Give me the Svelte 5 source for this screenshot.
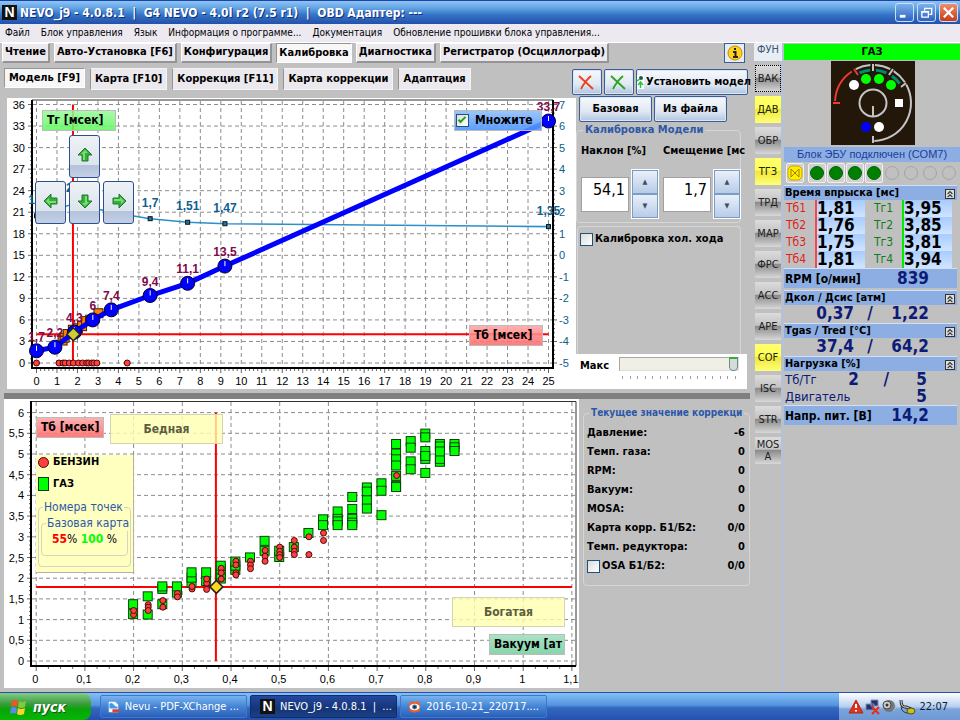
<script lang="ts">
    type Point = { x: number, y: number, label: string };

    const menu = ["Файл", "Блок управления", "Язык", "Информация о программе...", "Документация", "Обновление прошивки блока управления..."];
    const tabs = ["Чтение", "Авто-Установка [F6]", "Конфигурация", "Калибровка", "Диагностика", "Регистратор (Осциллограф)"];
    const subTabs = ["Модель [F9]", "Карта [F10]", "Коррекция [F11]", "Карта коррекции", "Адаптация"];
    const functions = ["ВАК", "ДАВ", "ОБР", "ТГЗ", "ТРД", "МАР", "ФРС", "АСС", "АРЕ", "COF", "ISC", "STR", "MOSA"];
    const enabled = ["ДАВ", "ТГЗ", "COF"];

    let tab = $state("Калибровка");
    let subTab = $state("Модель [F9]");
    let multiplier = $state(true);
    let idle = $state(false);
    let osa = $state(false);
    let level = $state(100);
    let slope = $state("54,1");
    let offset = $state("1,7");

    const corrections = [
        ["Давление:", "-6"],
        ["Темп. газа:", "0"],
        ["RPM:", "0"],
        ["Вакуум:", "0"],
        ["MOSA:", "0"],
        ["Карта корр. Б1/Б2:", "0/0"],
        ["Темп. редуктора:", "0"]
    ];

    const injection = [
        ["1", "1,81", "3,95"],
        ["2", "1,76", "3,85"],
        ["3", "1,75", "3,81"],
        ["4", "1,81", "3,94"]
    ];

    const range = (n: number) => Array.from({ length: n }, (_, i) => i);
    const fmt = (n: number) => String(Math.round(n * 10) / 10).replace(".", ",");

    // model chart scales
    const mx = (v: number) => 29.5 + v * 20.48;
    const my = (v: number) => 265 - v * 7.18;

    const model: Point[] = [
        { x: 0, y: 1.7, label: "1,7" },
        { x: 0.9, y: 2.2, label: "2,2" },
        { x: 1.85, y: 4.3, label: "4,3" },
        { x: 2.75, y: 6, label: "6" },
        { x: 3.65, y: 7.4, label: "7,4" },
        { x: 5.55, y: 9.4, label: "9,4" },
        { x: 7.38, y: 11.1, label: "11,1" },
        { x: 9.2, y: 13.5, label: "13,5" },
        { x: 25, y: 33.7, label: "33,7" }
    ];
    const factor: Point[] = [
        { x: 0, y: 20.5, label: "1,7" },
        { x: 1.85, y: 22.2, label: "2,2" },
        { x: 3.65, y: 21, label: "2" },
        { x: 5.55, y: 20.1, label: "1,7" },
        { x: 7.38, y: 19.6, label: "1,51" },
        { x: 9.2, y: 19.4, label: "1,47" },
        { x: 25, y: 19, label: "1,35" }
    ];
    const samples = [[1.25, 3.2], [1.35, 3.6], [1.5, 4.1], [1.75, 4.7], [2, 4.9], [2.2, 5.2], [2.4, 5.9], [2.6, 6.1], [3, 7]];
    const petrolTimes = [0, 1.1, 1.3, 1.4, 1.6, 1.8, 2.05, 2.25, 2.45, 2.55, 2.7, 2.8, 2.95, 4.43];

    // vacuum chart scales
    const vx = (v: number) => 32.2 + v * 487;
    const vy = (v: number) => 262 - v * 41.4;

    const gas: [number, number[]][] = [
        [0.2, [1.12, 1.36]], [0.23, [1.11, 1.55]], [0.26, [1.36, 1.73, 1.79]], [0.29, [1.64, 1.79]],
        [0.32, [1.88, 2, 2.13]], [0.35, [1.92, 2.13]], [0.38, [1.98, 2.08, 2.2, 2.29]], [0.41, [2.19, 2.29, 2.39]],
        [0.44, [2.49]], [0.47, [2.65, 2.89]], [0.5, [2.5, 2.65]], [0.53, [2.74]], [0.56, [3.08]],
        [0.59, [3.41, 3.27]], [0.62, [3.6, 3.42, 3.36, 3.27]], [0.65, [3.95, 3.66, 3.42, 3.33, 3.27]],
        [0.68, [4.18, 4.08, 3.87, 3.67]], [0.71, [4.28, 4.1, 3.51]], [0.74, [5.23, 5, 4.86, 4.71, 4.46, 4.22, 4.19]],
        [0.77, [5.3, 5.14, 4.81, 4.62]], [0.8, [5.48, 5.39, 5.06, 4.87, 4.94, 4.53]],
        [0.83, [5.23, 5.17, 4.8, 4.87, 5.05]], [0.86, [5.23, 5.15, 5.06]]
    ];
    const petrol: [number, number[]][] = [
        [0.2, [1.12, 1.22]], [0.23, [1.36, 1.3, 1.22]], [0.26, [1.46, 1.3]], [0.29, [1.63, 1.55]], [0.32, [1.74, 1.8]],
        [0.35, [1.73, 1.88, 1.98]], [0.38, [2.24, 2.13, 1.98]], [0.41, [2.41, 2.32, 2.13, 2.08]], [0.44, [2.41, 2.32, 2.23]],
        [0.47, [2.67, 2.53, 2.41]], [0.5, [2.75, 2.65, 2.57, 2.5]], [0.53, [2.91, 2.75, 2.65, 2.57]], [0.56, [3, 2.57]],
        [0.59, [3.09, 2.91]], [0.74, [4.48]]
    ];

    const line = (points: Point[]) => points.map(p => `${mx(p.x)},${my(p.y)}`).join(" ");

    // arc round the centre of the dial, degrees clockwise from the right
    function arc(r: number, from: number, to: number) {
        const at = (a: number) => `${42 + r * Math.cos(a * Math.PI / 180)} ${42 + r * Math.sin(a * Math.PI / 180)}`;
        return `M${at(from)}A${r} ${r} 0 0 1 ${at(to)}`;
    }
</script>

{#snippet arrow(name: string, angle: number)}
    <button class="arrow {name}" aria-label={name}>
        <svg viewBox="0 0 16 16" width="16" height="16">
            <path transform="rotate({angle} 8 8)" d="M8 1 15 8H11V14H5V8H1Z" fill="#35b03c" stroke="#1c7a2c" />
            <path transform="rotate({angle} 8 8)" d="M8 3 11 6H8V13H6V7H4Z" fill="#7fdc74" />
        </svg>
    </button>
{/snippet}

{#snippet collapse()}
    <button class="collapse" aria-label="Свернуть">
        <svg viewBox="0 0 10 10" width="8" height="8"><path d="M2 5 5 2 8 5M2 9 5 6 8 9" fill="none" stroke="#333" stroke-width="1.4" /></svg>
    </button>
{/snippet}

{#snippet diamond(x: number, y: number, fill: string)}
    <path transform="translate({x} {y})" d="M0-6.5 6.5 0 0 6.5-6.5 0Z" {fill} stroke="#222" stroke-width="1.5" />
{/snippet}

<div class="app">
    <header class="title">
        <span class="logo">N</span>
        <h1>NEVO_j9 - 4.0.8.1  |  G4 NEVO - 4.0l r2 (7.5 r1)  |  OBD Адаптер: ---</h1>
        <button class="win" aria-label="Свернуть"><svg viewBox="0 0 16 16"><path d="M3 12H9" stroke="#fff" stroke-width="3" /></svg></button>
        <button class="win" aria-label="Развернуть"><svg viewBox="0 0 16 16"><path d="M6 6V3.5H13.5V10H11M3 7H10V13H3ZM3 7.5H10" fill="none" stroke="#fff" stroke-width="1.4" /></svg></button>
        <button class="win close" aria-label="Закрыть"><svg viewBox="0 0 16 16"><path d="M3 3 13 13M13 3 3 13" stroke="#fff" stroke-width="2.4" /></svg></button>
    </header>

    <nav class="menu">
        {#each menu as item}
            <button>{item}</button>
        {/each}
    </nav>

    <main>
        <div class="work">
            <div class="tabs">
                {#each tabs as name}
                    <button class:active={tab === name} onclick={() => tab = name}>{name}</button>
                {/each}
                <button class="info" aria-label="Информация">
                    <svg viewBox="0 0 16 16" width="16" height="16">
                        <circle cx="8" cy="8" r="7" fill="#ffd21c" stroke="#c88a00" />
                        <path d="M8 3V5M6 7H8.500V12M6 12H11" fill="none" stroke="#222" stroke-width="2" />
                    </svg>
                </button>
            </div>

            <div class="subbar">
                <div class="subtabs">
                    {#each subTabs as name}
                        <button class:active={subTab === name} onclick={() => subTab = name}>{name}</button>
                    {/each}
                </div>
                <div class="actions">
                    <button class="xp cross" aria-label="Отмена"><svg viewBox="0 0 16 16" width="16" height="16"><path d="M1 2 15 15M13 2Q7 7 3 15" fill="none" stroke="#e8431a" stroke-width="1.8" /></svg></button>
                    <button class="xp cross" aria-label="Применить"><svg viewBox="0 0 16 16" width="16" height="16"><path d="M1 2 15 15M13 2Q7 7 3 15" fill="none" stroke="#2aa51c" stroke-width="1.8" /></svg></button>
                    <button class="xp apply">
                        <svg viewBox="0 0 7 14" width="7" height="14"><path d="M0 0H7V14H0Z" fill="#fff" /><circle cx="4" cy="3" r="2" fill="#1c5a50" /><path d="M0 6 3 4M3.500 7V13M1 10 3.500 7 6 10" stroke="#24c73c" stroke-width="1.5" fill="none" /></svg>
                        <span>Установить модел</span>
                    </button>
                </div>
            </div>

            <div class="upper">
                <div class="chart">
                    <svg viewBox="0 0 569 291" role="img" aria-label="Модель">
                        <g class="grid">
                            {#each range(26) as i}
                                <path d="M{mx(i)} 3V270" />
                            {/each}
                            {#each range(13) as i}
                                <path d="M25 {my(i * 3)}H546" />
                            {/each}
                        </g>
                        <g class="ticks">
                            {#each range(126) as i}
                                <path d="M{mx(i / 5)} 270v{i % 5 ? 3 : 5}" />
                            {/each}
                            {#each range(61) as i}
                                <path d="M25 {my(i * 0.6)}h{i % 5 ? -2 : -4}M546 {my(i * 0.6)}h{i % 5 ? 2 : 4}" />
                            {/each}
                        </g>
                        <path d="M25 2H546" class="thin" />
                        <path d="M25 2V270H546V2" class="frame" />
                        <g class="axis">
                            {#each range(26) as i}
                                <text x={mx(i)} y="287" text-anchor="middle">{i}</text>
                            {/each}
                            {#each range(13) as i}
                                <text x="18" y={my(i * 3) + 4} text-anchor="end">{i * 3}</text>
                                <text x="552" y={my(i * 3) + 4} class="right">{i - 5}</text>
                            {/each}
                        </g>
                        <polyline points={line(factor)} fill="none" stroke="#2b8fc9" stroke-width="1.6" />
                        {#each factor as p}
                            <rect x={mx(p.x) - 2} y={my(p.y) - 2} width="4" height="4" fill="#1c7ba8" stroke="#111" />
                            <text class="factor" x={mx(p.x)} y={my(p.y) - 12} text-anchor="middle">{p.label}</text>
                        {/each}
                        <path d="M{mx(0)} {my(4)}H{mx(25)}M{mx(1.78)} {my(36)}V{my(0)}" class="cross-hair" />
                        {#each samples as [x, y]}
                            <rect x={mx(x) - 4} y={my(y) - 4} width="9" height="9" fill="#ff8000" stroke="#3c2400" />
                        {/each}
                        <polyline points={line(model)} fill="none" stroke="#0000ff" stroke-width="5" />
                        {#each model as p}
                            <circle cx={mx(p.x)} cy={my(p.y)} r="7" fill="#0000ff" stroke="#000028" />
                            <path d="M{mx(p.x)} {my(p.y) - 5}v5" stroke="#fff" />
                            <text class="value" x={mx(p.x)} y={my(p.y) - 10} text-anchor="middle">{p.label}</text>
                        {/each}
                        {@render diamond(mx(1.8), my(4), "#cccc33")}
                        {#each petrolTimes as x}
                            <circle cx={mx(x)} cy={my(0)} r="3" fill="#ff4040" stroke="#4c0808" />
                        {/each}
                    </svg>
                    <span class="tag green">Тг [мсек]</span>
                    <label class="tag blue"><input type="checkbox" bind:checked={multiplier}>Множите</label>
                    <span class="tag red low">Тб [мсек]</span>
                    <div class="pad">
                        {@render arrow("up", 0)}
                        {@render arrow("left", 270)}
                        {@render arrow("down", 180)}
                        {@render arrow("right", 90)}
                    </div>
                </div>

                <div class="side">
                    <div class="sources">
                        <button class="xp">Базовая</button>
                        <button class="xp">Из файла</button>
                    </div>
                    <fieldset class="tune">
                        <legend>Калибровка Модели</legend>
                        <label for="slope">Наклон [%]</label>
                        <label for="offset">Смещение [мс</label>
                        <div class="spin">
                            <input id="slope" type="text" bind:value={slope}>
                            <div><button aria-label="Больше">▲</button><button aria-label="Меньше">▼</button></div>
                        </div>
                        <div class="spin">
                            <input id="offset" type="text" bind:value={offset}>
                            <div><button aria-label="Больше">▲</button><button aria-label="Меньше">▼</button></div>
                        </div>
                    </fieldset>
                    <div class="idle">
                        <label><input type="checkbox" bind:checked={idle}>Калибровка хол. хода</label>
                    </div>
                    <div class="max">
                        <label for="max">Макс</label>
                        <div>
                            <input id="max" type="range" min="0" max="100" bind:value={level}>
                            <div class="marks">{#each range(16) as _}<i></i>{/each}</div>
                        </div>
                    </div>
                </div>
            </div>

            <div class="splitter"></div>

            <div class="lower">
                <div class="chart">
                    <svg viewBox="0 0 575 289" role="img" aria-label="Вакуум">
                        <g class="grid">
                            {#each range(12) as i}
                                <path d="M{vx(i / 10)} 3V267" />
                            {/each}
                            {#each range(13) as i}
                                <path d="M28 {vy(i / 2)}H572" />
                            {/each}
                        </g>
                        <g class="ticks">
                            {#each range(45) as i}
                                <path d="M{vx(i / 40)} 267v{i % 4 ? 3 : 5}" />
                            {/each}
                            {#each range(61) as i}
                                <path d="M27 {vy(i / 10)}h{i % 5 ? -2 : -4}" />
                            {/each}
                        </g>
                        <path d="M27 2.500H572V267" class="thin" />
                        <path d="M27 2V267H572" class="frame" />
                        <g class="axis">
                            {#each range(12) as i}
                                <text x={vx(i / 10) - 1} y="284" text-anchor="middle">{fmt(i / 10)}</text>
                            {/each}
                            {#each range(13) as i}
                                <text x="20" y={vy(i / 2) + 4} text-anchor="end">{fmt(i / 2)}</text>
                            {/each}
                        </g>
                        <path d="M{vx(0)} {vy(1.79)}H{vx(1.1)}M{vx(0.369)} {vy(6)}V{vy(0)}" class="cross-hair" />
                        {#each gas as [x, ys]}
                            {#each ys as y}
                                <rect x={vx(x) - 5} y={vy(y) - 5} width="9" height="9" fill="#00ff00" stroke="#0a400a" />
                            {/each}
                        {/each}
                        {#each petrol as [x, ys]}
                            {#each ys as y}
                                <circle cx={vx(x)} cy={vy(y)} r="3" fill="#ff4040" stroke="#4c0808" />
                            {/each}
                        {/each}
                        {@render diamond(vx(0.37), vy(1.79), "#ffd81c")}
                    </svg>
                    <span class="tag red high">Тб [мсек]</span>
                    <span class="zone lean">Бедная</span>
                    <span class="zone rich">Богатая</span>
                    <span class="tag teal">Вакуум [ат</span>
                    <div class="legend">
                        <p><i class="dot"></i>БЕНЗИН</p>
                        <p><i class="box"></i>ГАЗ</p>
                        <fieldset>
                            <legend>Номера точек</legend>
                            <fieldset>
                                <legend>Базовая карта</legend>
                                <b class="hot">55</b>% <b class="lime">100</b> %
                            </fieldset>
                        </fieldset>
                    </div>
                </div>

                <fieldset class="current">
                    <legend>Текущее значение коррекци</legend>
                    <dl>
                        {#each corrections as [name, value]}
                            <div><dt>{name}</dt><dd>{value}</dd></div>
                        {/each}
                        <div><dt><label><input type="checkbox" bind:checked={osa}>OSA Б1/Б2:</label></dt><dd>0/0</dd></div>
                    </dl>
                </fieldset>
            </div>
        </div>

        <div class="functions">
            <h2>ФУН</h2>
            {#each functions as name}
                <button class:on={enabled.includes(name)} class:focus={name === "ВАК"}>{name}</button>
            {/each}
        </div>

        <aside>
            <div class="fuel">ГАЗ</div>
            <svg class="dial" viewBox="0 0 84 84" width="84" height="84" role="img" aria-label="Переключатель">
                <rect width="84" height="84" fill="#231709" />
                <g fill="none" stroke="#c4c4c4" stroke-width="2">
                    <circle cx="42" cy="42" r="13.500" />
                    <path d="M42 45V56M42 3V10M42 75V82M58 14 62 8M70 26 75 22" />
                    <path d={arc(38, 243, 266)} />
                    <path d={arc(38, 273, 297)} />
                    <path d={arc(38, 303, 327)} />
                    <path d={arc(38, 331, 448)} />
                    <path d="{arc(38, 183, 236)}M2 42H9M23 8 27 14" stroke="#ee3a30" />
                    <path d="{arc(33, 246, 265)}{arc(33, 275, 294)}{arc(33, 305, 324)}" stroke="#008c70" stroke-width="3" />
                </g>
                <g fill="#00ff00">
                    <circle cx="23" cy="24" r="5" fill="#fff" />
                    <circle cx="35" cy="18" r="5" />
                    <circle cx="48" cy="18" r="5" />
                    <circle cx="60" cy="24" r="5" />
                    <rect x="64" y="38" width="8" height="8" fill="#fff" />
                    <circle cx="35" cy="66" r="5" fill="#00f" />
                    <circle cx="48" cy="66" r="5" fill="#fff" />
                </g>
            </svg>
            <div class="status">Блок ЭБУ подключен (COM7)</div>
            <div class="leds">
                <button class="valve" aria-label="Клапан"><svg viewBox="0 0 16 16" width="16" height="16"><path d="M4 1H12L15 4V12L12 15H4L1 12V4Z" fill="#ffee00" stroke="#c8a800" /><path d="M4 4V12L12 4V12Z" fill="none" stroke="#a08000" /></svg></button>
                {#each range(8) as i}
                    <button class:lit={i < 4} aria-label="Цилиндр {i + 1}"><i></i></button>
                {/each}
            </div>

            <section>
                <h3>Время впрыска [мс] {@render collapse()}</h3>
                <div class="injection">
                    {#each injection as [n, tb, tg]}
                        <span class="tb">Тб{n}</span><output class="tb">{tb}</output>
                        <span class="tg">Тг{n}</span><output class="tg">{tg}</output>
                    {/each}
                </div>
            </section>
            <section class="single"><span>RPM [о/мин]</span><output>839</output></section>
            <section>
                <h3>Дкол / Дсис [атм] {@render collapse()}</h3>
                <div class="pair"><output>0,37</output><b>/</b><output>1,22</output></div>
            </section>
            <section>
                <h3>Tgas / Tred [°C] {@render collapse()}</h3>
                <div class="pair"><output>37,4</output><b>/</b><output>64,2</output></div>
            </section>
            <section>
                <h3>Нагрузка [%] {@render collapse()}</h3>
                <div class="load"><span>Тб/Тг</span><output>2</output><b>/</b><output>5</output></div>
                <div class="load"><span class="wide">Двигатель</span><output>5</output></div>
            </section>
            <section class="single"><span>Напр. пит. [В]</span><output>14,2</output></section>
        </aside>
    </main>

    <footer>
        <button class="start">
            <svg viewBox="0 0 18 18" width="18" height="18">
                <path d="M3 3Q6 1 9 3L8 9Q5 7 2 9Z" fill="#f0552a" />
                <path d="M10 3Q13 5 17 3L16 9Q12 11 9 9Z" fill="#7ccc3c" />
                <path d="M2 10Q5 8 8 10L7 16Q4 14 1 16Z" fill="#5a8cf0" />
                <path d="M9 10Q12 12 16 10L15 16Q11 18 8 16Z" fill="#ffd030" />
            </svg>
            пуск
        </button>
        <button class="task">
            <svg viewBox="0 0 16 16" width="16" height="16"><path d="M1 1H10L14 5V15H1Z" fill="#f4f8ff" /><path d="M2 4Q5 1 8 5T13 7V10H2Z" fill="#3c9ce8" /><path d="M6 11H15V15H6Z" fill="#e04030" /></svg>
            <span>Nevu - PDF-XChange ...</span>
        </button>
        <button class="task current-task"><span class="logo">N</span><span>NEVO_j9 - 4.0.8.1  |  ...</span></button>
        <button class="task">
            <svg viewBox="0 0 16 16" width="16" height="16"><path d="M3 1 8 2 13 1 15 6 14 13 8 15 2 13 1 6Z" fill="#e8602c" /><ellipse cx="8" cy="8" rx="6" ry="4" fill="#fff" /><circle cx="8" cy="8" r="3" fill="#3c6ea8" /><circle cx="8" cy="8" r="1.300" fill="#111" /></svg>
            <span>2016-10-21_220717....</span>
        </button>
        <div class="tray">
            <svg viewBox="0 0 68 16" width="68" height="16">
                <path d="M8 1 15 14H1Z" fill="#e0341c" stroke="#b82410" /><path d="M8 5V9M8 11V12.500" stroke="#fff" stroke-width="2" />
                <path d="M23 1H30V7H23ZM18 5H26V11H18Z" fill="#28306c" stroke="#8890b8" /><path d="M24 8 31 15M31 8 24 15" stroke="#e82a20" stroke-width="2" />
                <circle cx="41" cy="7" r="6" fill="#777" /><circle cx="39" cy="6" r="4" fill="#ccc" stroke="#444" /><circle cx="39" cy="6" r="1.500" fill="#333" /><path d="M45 12Q48 10 48 6" stroke="#a8b8f0" fill="none" />
                <path d="M53 1Q53 9 58 8L63 10" fill="none" stroke="#222" stroke-width="3" /><path d="M53 1Q53 9 58 8L63 10" fill="none" stroke="#eee" /><path d="M53 8Q54 14 60 14" fill="none" stroke="#333" /><ellipse cx="63" cy="12" rx="4" ry="3" fill="#c8c020" stroke="#555510" />
            </svg>
            <time>22:07</time>
        </div>
    </footer>
</div>

<style>
    :global(body) {
        margin: 0;
    }

    .app {
        --face: "DejaVu Sans Condensed", "DejaVu Sans", sans-serif;
        --navy: #0c1c78;
        --bar: #8caee2;
        display: flex;
        flex-direction: column;
        min-height: 100vh;
        background: #c0c0c0;
        font: 11px/14px var(--face);
        color: #000;
    }

    .app *, .app *::before {
        box-sizing: border-box;
    }

    button, input {
        font: inherit;
        color: inherit;
        margin: 0;
        padding: 0;
    }

    button {
        border: 0;
        background: none;
        white-space: nowrap;
    }

    h1, h2, h3, p, dl, dd {
        margin: 0;
    }

    fieldset {
        min-width: 0;
        margin: 0;
        padding: 0;
        border: 1px solid #d6d6d6;
        border-radius: 4px;
    }

    legend {
        padding: 0 2px;
        color: #2c58a8;
        white-space: nowrap;
    }

    input[type="checkbox"] {
        appearance: none;
        flex: none;
        width: 13px;
        height: 13px;
        border: 1px solid #1c5180;
        background: linear-gradient(135deg, #dcdcd7, #fff);
    }

    input[type="checkbox"]:checked::before {
        content: "";
        display: block;
        width: 8px;
        height: 4px;
        margin: 2px 1px;
        border: solid #21a121;
        border-width: 0 0 2px 2px;
        transform: rotate(-45deg);
    }

    /* window title and menu */
    .title {
        display: flex;
        align-items: center;
        gap: 2px;
        height: 24px;
        padding: 0 2px;
        border-top: 1px solid #1c44a8;
        background: linear-gradient(#8ec4f4, #64a4e4 30%, #3474c8 60%, #2450a8);
    }

    .logo {
        flex: none;
        width: 15px;
        height: 15px;
        background: #111;
        color: #fff;
        font: bold 14px/15px "Liberation Sans", sans-serif;
        text-align: center;
    }

    h1 {
        flex: 1;
        padding-left: 1px;
        color: #fff;
        font: bold 12px/20px var(--face);
        text-shadow: 1px 1px #10307c;
        white-space: pre;
        overflow: hidden;
    }

    .win {
        width: 19px;
        height: 19px;
        margin-left: 1px;
        border: 1px solid #c8e0fc;
        border-radius: 3px;
        background: linear-gradient(#7cb0ec, #2c62c0);
    }

    .win svg {
        display: block;
        width: 15px;
        margin: auto;
    }

    .close {
        background: linear-gradient(#f08c6c, #c83c18);
    }

    .menu {
        display: flex;
        gap: 11px;
        height: 19px;
        padding: 0 5px;
        background: #ece9f0;
        border-bottom: 1px solid #fff;
        font-size: 10px;
    }

    main {
        flex: 1;
        display: flex;
    }

    .work {
        flex: 1;
        min-width: 0;
    }

    /* tabs */
    .tabs, .subtabs {
        display: flex;
        font-weight: bold;
    }

    .tabs {
        gap: 4px;
        height: 20px;
        padding: 0 5px 0 2px;
    }

    .tabs button {
        padding: 0 2px 1px;
        border: 1px solid #fff;
        border-right: 2px solid #949494;
        border-bottom: 2px solid #949494;
        background: #ece9ee;
    }

    .tabs .active, .subtabs .active {
        border: 1px solid #949494;
        border-right-color: #fff;
        border-bottom-color: #fff;
        background: #f8f7f8;
    }

    .tabs .info {
        width: 21px;
        margin-left: auto;
        padding: 0;
        border: 1px solid #3c5e98;
        background: #e4ecf4;
    }

    .info svg {
        display: block;
        margin: auto;
    }

    .subbar {
        display: flex;
        justify-content: space-between;
        align-items: flex-start;
        height: 33px;
        padding: 5px 2px 0 4px;
    }

    .subtabs {
        gap: 5px;
    }

    .subtabs button {
        height: 22px;
        padding: 0 4px;
        border: 1px solid #f4f4f4;
        border-left-color: #949494;
        background: #ece9ee;
    }

    .subtabs .active {
        height: 20px;
    }

    .actions, .sources {
        display: flex;
        gap: 2px;
        font-weight: bold;
    }

    .actions {
        padding-top: 1px;
    }

    .xp {
        height: 26px;
        border: 1px solid #3c5e98;
        border-radius: 2px;
        background: linear-gradient(#f6f9fc, #e0e8f2 60%, #b0c4e0);
        box-shadow: inset 0 0 0 1px #dce6f2;
    }

    .cross {
        width: 30px;
    }

    .cross svg {
        display: block;
        margin: 4px 5px;
    }

    .apply {
        display: flex;
        align-items: center;
        gap: 2px;
        width: 112px;
    }

    .apply svg {
        flex: none;
    }

    /* charts */
    .upper, .lower {
        display: flex;
    }

    .upper {
        padding-left: 7px;
    }

    .chart {
        flex: 1;
        position: relative;
        min-width: 0;
        background: #fff;
    }

    .upper .chart {
        margin-top: 2px;
    }

    .chart > svg {
        display: block;
        width: 100%;
    }

    .grid path {
        stroke: #8c8c8c;
        stroke-dasharray: 4 3;
    }

    .ticks path {
        stroke: #666;
    }

    .frame {
        fill: none;
        stroke: #000;
        stroke-width: 2;
    }

    .thin {
        fill: none;
        stroke: #333;
    }

    .axis {
        font: 11px "Liberation Sans", sans-serif;
    }

    .right {
        fill: #0c6088;
    }

    .factor, .value {
        font: bold 12px "Liberation Sans", sans-serif;
        fill: #0c6090;
    }

    .value {
        fill: #80084c;
    }

    .cross-hair {
        stroke: #ff0000;
        stroke-width: 2;
    }

    .tag, .zone {
        position: absolute;
        height: 21px;
        padding: 0 4px;
        border: 1px solid #bcbcbc;
        font-size: 12px;
        font-weight: bold;
        line-height: 19px;
        white-space: nowrap;
    }

    .green {
        top: 12px;
        left: 35px;
        width: 74px;
        background: linear-gradient(#98fa98d8, #60f860e0);
    }

    .blue {
        display: flex;
        align-items: center;
        gap: 6px;
        top: 12px;
        right: 34px;
        width: 88px;
        padding: 0 1px;
        background: linear-gradient(#8cbcfcdc, #4c94fce4);
    }

    .red {
        background: linear-gradient(#ffa4a4dc, #ff6c6ce4);
    }

    .low {
        right: 33px;
        bottom: 43px;
        width: 74px;
    }

    .high {
        top: 18px;
        left: 32px;
        width: 68px;
    }

    .teal {
        right: 14px;
        bottom: 33px;
        width: 76px;
        background: linear-gradient(#a0e0c0e4, #7cd0a4e8);
    }

    .zone {
        width: 113px;
        height: 30px;
        border-color: #d4d4b4;
        background: #ffffb0cc;
        color: #5c5c40;
        line-height: 28px;
        text-align: center;
    }

    .lean {
        top: 15px;
        left: 106px;
    }

    .rich {
        right: 14px;
        bottom: 61px;
    }

    .pad {
        position: absolute;
        top: 37px;
        left: 28px;
        display: grid;
        grid-template: ". up ." 43px "left down right" 43px / 31px 31px 31px;
        gap: 3px;
    }

    .arrow {
        border: 1px solid #2c508c;
        border-radius: 3px;
        background: linear-gradient(#eef2f6, #dce4ec 70%, #b4c2dc 72%, #c4d0e4);
    }

    .up {
        grid-area: up;
    }

    .left {
        grid-area: left;
    }

    .down {
        grid-area: down;
    }

    .arrow.right {
        grid-area: right;
    }

    .legend {
        position: absolute;
        top: 56px;
        left: 32px;
        width: 98px;
        height: 118px;
        border: solid #b4b4a0;
        border-width: 0 1px 1px 0;
        background: #ffffc0;
    }

    .legend p {
        display: flex;
        align-items: center;
        gap: 4px;
        height: 14px;
        margin-bottom: 8px;
        padding: 0 2px;
        font-weight: bold;
    }

    .legend fieldset {
        height: 68px;
        margin: 0 2px;
        border-color: #d4d4c0;
        font-size: 12px;
        line-height: 16px;
    }

    .legend fieldset fieldset {
        height: 41px;
        text-align: center;
    }

    .legend fieldset legend {
        margin-left: 4px;
        padding: 0 1px;
        text-align: left;
    }

    .dot, .box {
        width: 11px;
        height: 11px;
        border: 1px solid #4c0808;
        border-radius: 50%;
        background: #ff4040;
    }

    .box {
        height: 14px;
        border-color: #0a400a;
        border-radius: 0;
        background: #0f0;
    }

    .hot {
        color: #f00;
    }

    .lime {
        color: #0f0;
    }

    /* panel beside the model chart */
    .side {
        display: flex;
        flex-direction: column;
        width: 174px;
        font-weight: bold;
    }

    .sources {
        padding-left: 3px;
    }

    .sources button {
        width: 73px;
    }

    .tune {
        display: grid;
        grid-template-columns: 80px 78px;
        align-content: start;
        gap: 11px 2px;
        height: 100px;
        margin: 1px 9px 0 0;
        padding: 7px 4px 0;
    }

    .tune legend {
        margin-left: 2px;
    }

    .tune label {
        white-space: nowrap;
    }

    .spin {
        display: flex;
        align-items: center;
        gap: 2px;
    }

    .spin input {
        width: 48px;
        height: 35px;
        padding: 0 3px 10px 0;
        border: 1px solid #a0a0a0;
        background: #fff;
        font: 16px var(--face);
        text-align: right;
    }

    .spin div {
        display: flex;
        flex-direction: column;
        width: 28px;
        height: 50px;
        border: 1px solid #fff;
    }

    .spin button {
        flex: 1;
        border: 1px solid #7c9cc8;
        background: linear-gradient(#e8f0fa, #b8cce8);
        color: #444c5c;
        font-size: 7px;
        line-height: 7px;
    }

    .idle {
        flex: 1;
        margin: 3px 9px 0 1px;
        padding: 5px 2px;
        border: 1px solid #d6d6d6;
        border-bottom: 0;
        border-radius: 4px 4px 0 0;
    }

    .idle label, .current label {
        display: flex;
        align-items: center;
        gap: 2px;
    }

    .max {
        display: flex;
        gap: 10px;
        height: 35px;
        margin-right: 3px;
        padding: 3px 8px 0 4px;
        background: #fff;
    }

    .max label {
        padding-top: 2px;
    }

    .max > div {
        flex: 1;
    }

    input[type="range"] {
        appearance: none;
        display: block;
        width: 100%;
        height: 14px;
        border: 1px solid #a8a8a0;
        border-right-color: #ddd;
        border-bottom-color: #ddd;
        background: #f0efe6;
    }

    input[type="range"]::-webkit-slider-thumb {
        appearance: none;
        width: 9px;
        height: 14px;
        border: 1px solid #6c8a8c;
        border-top: 2px solid #2cb42c;
        border-radius: 1px 1px 5px 5px;
        background: #d4dcdc;
    }

    .marks {
        display: flex;
        justify-content: space-between;
        padding: 5px 3px 0;
    }

    .marks i {
        width: 1px;
        height: 3px;
        background: #a0a0a0;
    }

    .splitter {
        height: 6px;
        margin: 4px 0 0 4px;
        background: #808080;
    }

    .lower {
        padding-left: 4px;
    }

    .current {
        align-self: flex-start;
        width: 167px;
        height: 180px;
        margin: 7px 0 0 4px;
        font-weight: bold;
    }

    .current legend {
        margin-left: 5px;
        font-size: 10px;
    }

    .current dl {
        padding-top: 3px;
    }

    .current div {
        display: flex;
        justify-content: space-between;
        height: 19px;
        padding: 3px 4px 0 3px;
    }

    /* function column */
    .functions {
        display: flex;
        flex-direction: column;
        gap: 4px;
        width: 28px;
        margin: 0 1px 0 4px;
    }

    h2 {
        height: 18px;
        background: #e8eef6;
        color: #44546c;
        font: 11px/14px var(--face);
        text-align: center;
    }

    .functions button {
        width: 26px;
        height: 27px;
        margin-left: 1px;
        background: linear-gradient(#dcdcdc, #c4c4c4 45%, #8c8c8c 50%, #d8d8d8);
        color: #202020;
        line-height: 12px;
        white-space: normal;
        overflow-wrap: anywhere;
    }

    .functions .on {
        background: linear-gradient(#ffff70, #ffff50 45%, #f0e838 50%, #ffff78);
    }

    .functions .focus {
        outline: 1px dotted #000;
        outline-offset: -1px;
    }

    /* live values */
    aside {
        width: 177px;
        border-left: 1px solid #a8c4ec;
        font-weight: bold;
    }

    .fuel {
        height: 16px;
        margin-top: 1px;
        background: #0f0;
        line-height: 16px;
        text-align: center;
    }

    .dial {
        display: block;
        margin: 1px auto 2px 47px;
    }

    .status {
        height: 15px;
        background: var(--bar);
        color: #1c3c9c;
        font-family: "Liberation Sans", sans-serif;
        font-weight: normal;
        text-align: center;
    }

    .leds {
        display: flex;
        gap: 1px;
        padding: 1px 2px 2px;
    }

    .leds button {
        width: 18px;
        height: 20px;
    }

    .leds .lit, .leds .valve {
        border: 1px solid #f0f0f0;
        border-radius: 2px;
        background: #d0d0d0;
    }

    .leds .valve {
        margin-right: 3px;
    }

    .leds svg, .leds i {
        display: block;
        margin: auto;
    }

    .leds i {
        width: 14px;
        height: 14px;
        border: 1px solid #a4a4a4;
        border-radius: 50%;
    }

    .leds .lit i {
        border-color: #006400;
        background: #008000;
    }

    section {
        margin: 0 3px 0 0;
        border-top: 1px solid #d0e0f8;
    }

    h3 {
        display: flex;
        justify-content: space-between;
        height: 14px;
        padding: 0 2px 0 1px;
        background: var(--bar);
        font: bold 11px/13px var(--face);
    }

    .collapse {
        width: 10px;
        height: 10px;
        margin-top: 3px;
        border: 1px solid #333;
        background: #ddd;
    }

    .collapse svg {
        display: block;
    }

    output, .pair b, .load b {
        color: var(--navy);
        font-size: 17px;
        line-height: 17px;
    }

    .injection {
        display: grid;
        grid-template-columns: 26px 50px 31px 50px;
        grid-auto-rows: 17px;
        column-gap: 3px;
        padding-left: 2px;
        font-size: 12px;
        font-weight: normal;
        line-height: 17px;
    }

    .injection output {
        border-left: 2px solid #f44;
        background: linear-gradient(#a8ccfc, #d0e4ff);
        color: #000;
        font-weight: bold;
    }

    .injection output.tg {
        border-color: #0e0;
    }

    span.tb {
        color: #e01c1c;
    }

    span.tg {
        padding-left: 6px;
        color: #0c7c1c;
    }

    .single {
        display: flex;
        align-items: center;
        height: 20px;
        margin-bottom: 2px;
        padding: 0 28px 0 1px;
        background: var(--bar);
        font-size: 12px;
    }

    .single output {
        margin-left: auto;
    }

    .pair {
        display: grid;
        grid-template-columns: 70px 32px 1fr;
        height: 18px;
        padding-right: 28px;
        text-align: right;
    }

    .pair b {
        text-align: center;
    }

    .load {
        display: grid;
        grid-template-columns: 40px 34px 30px 1fr;
        align-items: center;
        height: 17px;
        padding: 0 30px 0 1px;
        color: var(--navy);
        font-size: 13px;
        font-weight: normal;
        text-align: right;
    }

    .load output, .load b {
        font-weight: bold;
    }

    .load span {
        text-align: left;
    }

    .load .wide {
        grid-column: 1 / 4;
    }

    /* taskbar */
    footer {
        display: flex;
        gap: 3px;
        height: 28px;
        border-top: 1px solid #2450b0;
        background: linear-gradient(#84c0f4, #5494e0 45%, #3468c0 55%, #2450b0);
        color: #fff;
    }

    .start {
        display: flex;
        align-items: center;
        gap: 6px;
        width: 91px;
        margin-right: 6px;
        padding-left: 9px;
        border-radius: 0 8px 8px 0;
        background: linear-gradient(#84cc84, #3c9c40 40%, #08a408 60%, #04b804);
        font: italic bold 14px var(--face);
        text-shadow: 1px 1px #1c541c;
    }

    .task {
        display: flex;
        align-items: center;
        gap: 5px;
        width: 147px;
        height: 23px;
        margin-top: 2px;
        padding: 0 7px;
        border: 1px solid #3c78cc;
        border-radius: 2px;
        background: linear-gradient(#78b4f0, #4484d4 50%, #2c60b8);
        white-space: pre;
        overflow: hidden;
    }

    .current-task {
        padding-left: 9px;
        border-color: #102c70;
        background: linear-gradient(#24489c, #143478 60%, #1c4084);
    }

    .tray {
        display: flex;
        align-items: center;
        justify-content: space-between;
        width: 121px;
        margin-left: auto;
        padding: 0 12px 0 9px;
        background: linear-gradient(#fff, #b8d0f0 50%, #7ca4dc 60%, #6c98d4);
        color: #101c30;
    }
</style>
